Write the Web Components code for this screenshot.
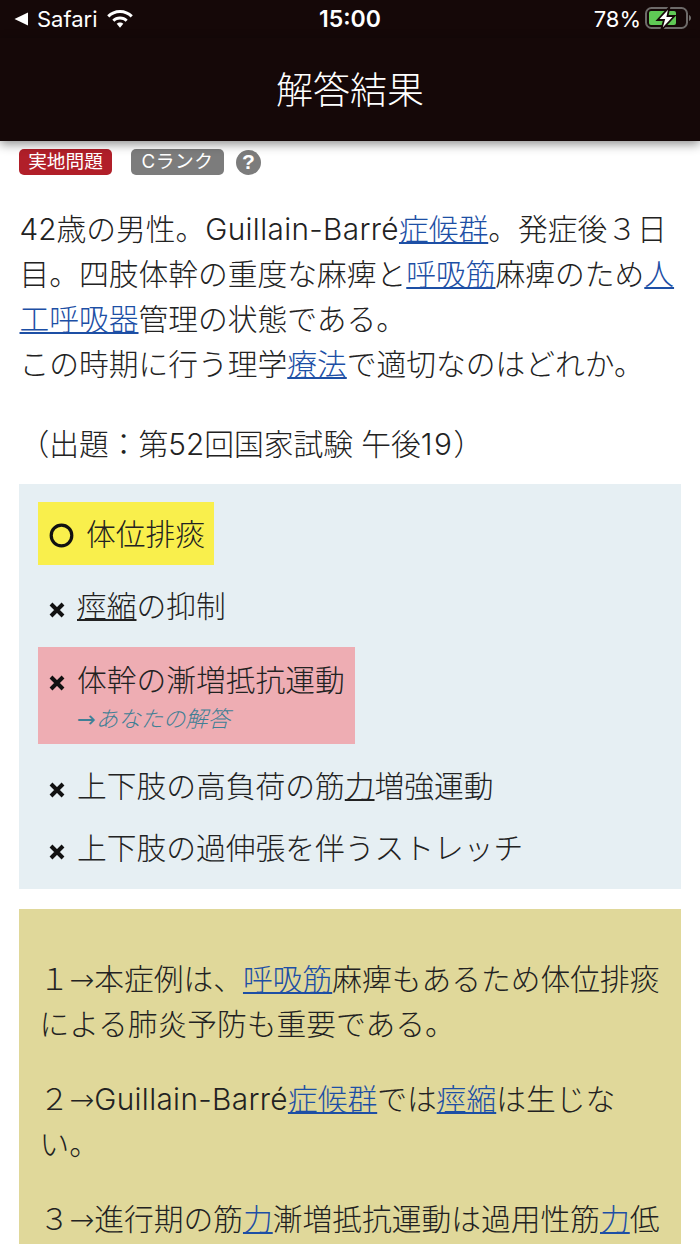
<!DOCTYPE html>
<html lang="ja">
<head>
<meta charset="utf-8">
<title>解答結果</title>
<style>
    html, body { margin: 0; height: 1244px; overflow: hidden; background: #fff; }
    body { font-family: Inter, "Noto Sans CJK JP", sans-serif; font-weight: 300; color: #222; }
    question-text a, explain-box a { color: #1d4fa5; }
    .arrow { font-family: "DejaVu Sans", sans-serif; }
    .lat { letter-spacing: .35px; }
    .wide { letter-spacing: 1.5px; }
</style>
</head>
<body>
<ios-status-bar></ios-status-bar>
<app-header>解答結果</app-header>
<tag-row></tag-row>
<question-text>
    42歳の男性。<span class="lat">Guillain-Barré</span><a href="#">症候群</a>。発症後３日目。四肢体幹の重度な麻痺と<a href="#">呼吸筋</a>麻痺のため<a href="#">人工呼吸器</a>管理の状態である。<br>この時期に行う理学<a href="#">療法</a>で適切なのはどれか。
    <span slot="source">（出題：第52回国家試験 午後<span class="wide">19</span>）</span>
</question-text>
<choice-list>
    <choice-item mark="o" state="correct">体位排痰</choice-item>
    <choice-item mark="x"><u>痙縮</u>の抑制</choice-item>
    <choice-item mark="x" state="mine">体幹の漸増抵抗運動</choice-item>
    <choice-item mark="x">上下肢の高負荷の筋<u>力</u>増強運動</choice-item>
    <choice-item mark="x">上下肢の過伸張を伴うストレッチ</choice-item>
</choice-list>
<explain-box>
    <p>１<span class="arrow">→</span>本症例は、<a href="#">呼吸筋</a>麻痺もあるため体位排痰による肺炎予防も重要である。</p>
    <p>２<span class="arrow">→</span><span class="lat">Guillain-Barré</span><a href="#">症候群</a>では<a href="#">痙縮</a>は生じない。</p>
    <p>３<span class="arrow">→</span>進行期の筋<a href="#">力</a>漸増抵抗運動は過用性筋<a href="#">力</a>低下を招くため行わない。</p>
</explain-box>

<script>
class IosStatusBar extends HTMLElement {
    constructor() {
        super();
        this.attachShadow({ mode: "open" });
        this.shadowRoot.innerHTML = `
            <style>
                :host {
                    display: grid;
                    grid-template-columns: 1fr auto 1fr;
                    align-items: center;
                    height: 38px;
                    background: #150808;
                    color: #fff;
                    font-family: Inter, "Liberation Sans", sans-serif;
                    font-size: 22px;
                    font-weight: 400;
                    padding: 0 9px;
                    box-sizing: border-box;
                }
                .left, .right { display: flex; align-items: center; }
                .left { gap: 8px; padding-left: 5px; }
                .right { justify-content: flex-end; gap: 4px; }
                .time { font-weight: 600; font-size: 23px; }
            </style>
            <div class="left">
                <svg width="15" height="14" viewBox="0 0 15 14"><path d="M14 0.5V13.5L0.5 7Z" fill="#fff"/></svg>
                <span>Safari</span>
                <svg width="28" height="20" viewBox="0 0 28 20" fill="#fff">
                    <path d="M14 1C9 1 4.600 3 1.200 6.300L3.300 8.500C6.200 5.700 9.900 4.100 14 4.100S21.800 5.700 24.700 8.500L26.800 6.300C23.400 3 19 1 14 1Z"/>
                    <path d="M14 7.500C11 7.500 8.300 8.700 6.300 10.700L8.400 12.800C9.900 11.400 11.800 10.600 14 10.600S18.100 11.400 19.600 12.800L21.700 10.700C19.700 8.700 17 7.500 14 7.500Z"/>
                    <path d="M14 13.500C12.800 13.500 11.600 14 10.700 14.800L14 18.700L17.300 14.800C16.400 14 15.200 13.500 14 13.500Z"/>
                </svg>
            </div>
            <span class="time">15:00</span>
            <div class="right">
                <span>78%</span>
                <svg width="46" height="24" viewBox="0 0 46 24">
                    <rect x="1" y="1" width="41" height="20" rx="5.500" fill="none" stroke="#6d6a69" stroke-width="2"/>
                    <rect x="4" y="4" width="27" height="14" rx="2" fill="#5fc955"/>
                    <path d="M44 8V14C45.300 13.500 46 12.400 46 11S45.300 8.500 44 8Z" fill="#6d6a69"/>
                    <path d="M24.500 0L12.500 13H19L16 23.500L29.500 9H22.500Z" fill="#fff" stroke="#150808" stroke-width="1.800"/>
                </svg>
            </div>
        `;
    }
}

class AppHeader extends HTMLElement {
    constructor() {
        super();
        this.attachShadow({ mode: "open" });
        this.shadowRoot.innerHTML = `
            <style>
                :host {
                    display: flex;
                    justify-content: center;
                    align-items: center;
                    height: 103px;
                    padding-bottom: 4px;
                    box-sizing: border-box;
                    background: #150808;
                    color: #fff;
                    font-size: 37px;
                    box-shadow: 0 3px 10px rgba(0,0,0,.45);
                    position: relative;
                }
            </style>
            <slot></slot>
        `;
    }
}

class TagRow extends HTMLElement {
    constructor() {
        super();
        this.attachShadow({ mode: "open" });
        this.shadowRoot.innerHTML = `
            <style>
                :host {
                    display: flex;
                    align-items: center;
                    height: 28px;
                    margin-top: 7px;
                    padding-left: 19px;
                    font-size: 18.700px;
                    font-weight: 400;
                    color: #fff;
                }
                span {
                    display: flex;
                    align-items: center;
                    justify-content: center;
                    height: 26px;
                    width: 93px;
                    border-radius: 5px;
                    line-height: 1;
                }
                .exam { background: #b11f29; }
                .rank { background: #7c7c7c; margin-left: 19px; letter-spacing: .6px; }
                .help {
                    width: 25px;
                    height: 25px;
                    border-radius: 50%;
                    background: #7c7c7c;
                    margin-left: 12px;
                    font: 700 21px "Liberation Sans", sans-serif;
                }
            </style>
            <span class="exam">実地問題</span>
            <span class="rank">Cランク</span>
            <span class="help">?</span>
        `;
    }
}

class QuestionText extends HTMLElement {
    constructor() {
        super();
        this.attachShadow({ mode: "open" });
        this.shadowRoot.innerHTML = `
            <style>
                :host {
                    display: block;
                    padding: 31px 19px 0 19.500px;
                    font-size: 29.750px;
                    line-height: 45px;
                }
                .source { display: block; margin-top: 35px; }
            </style>
            <slot></slot>
            <div class="source"><slot name="source"></slot></div>
        `;
    }
}

class ChoiceList extends HTMLElement {
    constructor() {
        super();
        this.attachShadow({ mode: "open" });
        this.shadowRoot.innerHTML = `
            <style>
                :host {
                    display: flex;
                    flex-direction: column;
                    align-items: flex-start;
                    margin: 17px 19px 0;
                    padding: 8px 19px 10px;
                    background: #e6eff3;
                }
            </style>
            <slot></slot>
        `;
    }
}

class ChoiceItem extends HTMLElement {
    constructor() {
        super();
        this.attachShadow({ mode: "open" });
        const mine = this.getAttribute("state") === "mine";
        const markSvg = this.getAttribute("mark") === "o"
            ? `<svg width="25" height="25" viewBox="0 0 25 25"><circle cx="12.500" cy="12.500" r="10.300" fill="none" stroke="#111" stroke-width="3.200"/></svg>`
            : `<svg width="16" height="16" viewBox="0 0 16 16"><path d="M2 2L14 14M14 2L2 14" stroke="#111" stroke-width="4"/></svg>`;
        this.shadowRoot.innerHTML = `
            <style>
                :host {
                    display: grid;
                    grid-template-columns: 28px auto;
                    box-sizing: border-box;
                    height: 62px;
                    align-items: center;
                    padding: 0 10px 0 11px;
                    font-size: 29.750px;
                    line-height: 44px;
                }
                :host([state="correct"]) {
                    background: #f9ef4c;
                    grid-template-columns: 37px auto;
                    height: 63px;
                    margin: 10px 0;
                    padding-right: 9px;
                }
                :host([state="mine"]) {
                    background: #eeadb3;
                    height: 97px;
                    margin: 10px 0 11px;
                    padding-top: 11px;
                    align-items: start;
                }
                .mark { display: flex; align-items: center; padding-top: 7px; }
                :host([state="correct"]) .mark { padding-top: 4px; }
                :host([state="mine"]) .mark { height: 44px; box-sizing: border-box; padding-top: 5px; }
                .mine {
                    display: block;
                    color: #3f7f95;
                    font-style: italic;
                    font-size: 22.400px;
                    line-height: 34px;
                }
                .mine .arr { font-family: "DejaVu Sans", sans-serif; }
            </style>
            <span class="mark">${markSvg}</span>
            <div><slot></slot>${mine ? `<span class="mine"><span class="arr">→</span>あなたの解答</span>` : ""}</div>
        `;
    }
}

class ExplainBox extends HTMLElement {
    constructor() {
        super();
        this.attachShadow({ mode: "open" });
        this.shadowRoot.innerHTML = `
            <style>
                :host {
                    display: block;
                    margin: 20px 19px 0;
                    padding: 48px 17px 30px 20.500px;
                    background: #e0d89a;
                    font-size: 29.750px;
                    line-height: 45px;
                }
                ::slotted(p) { margin: 0 0 30px; }
            </style>
            <slot></slot>
        `;
    }
}

customElements.define("ios-status-bar", IosStatusBar);
customElements.define("app-header", AppHeader);
customElements.define("tag-row", TagRow);
customElements.define("question-text", QuestionText);
customElements.define("choice-list", ChoiceList);
customElements.define("choice-item", ChoiceItem);
customElements.define("explain-box", ExplainBox);
</script>
</body>
</html>
